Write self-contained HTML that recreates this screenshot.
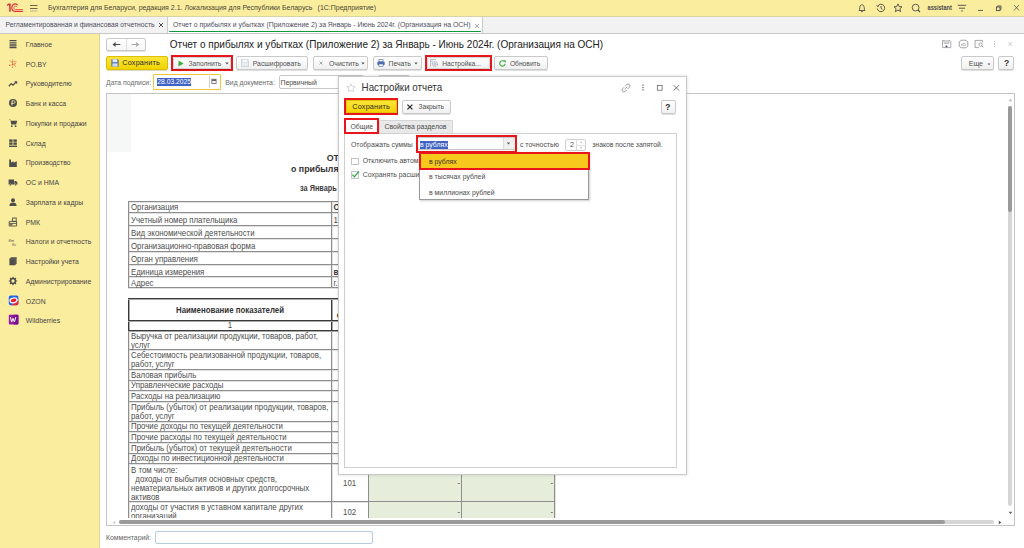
<!DOCTYPE html>
<html><head><meta charset="utf-8">
<style>
*{box-sizing:border-box;margin:0;padding:0}
html,body{width:1024px;height:548px;overflow:hidden}
body{position:relative;font-family:"Liberation Sans",sans-serif;background:#fff;color:#4d4d4d}
.a{position:absolute}
.t{position:absolute;white-space:nowrap;line-height:10px;transform:scaleY(1.12);transform-origin:0 7.6px}
#titlebar{left:0;top:0;width:1024px;height:16px;background:#fbed9e}
#tabbar{left:0;top:16px;width:1024px;height:18px;background:#f2f2f2;border-top:1px solid #d8d3a8;border-bottom:1px solid #c8c8c8}
#sidebar{left:0;top:34px;width:100px;height:514px;background:#fbed9e;border-right:1px solid #ddd59c}
.si{position:absolute;left:25.8px;font-size:6.86px;color:#454545;white-space:nowrap;line-height:10px;transform:scaleY(1.12);transform-origin:0 7.6px}
.btn{position:absolute;height:13.25px;border:1px solid #c9c9c9;border-radius:2px;background:linear-gradient(#ffffff,#f0f0f0);box-shadow:0 1px 0 rgba(0,0,0,.12);font-size:6.9px;color:#4d4d4d;white-space:nowrap;line-height:11px}
.red{position:absolute;border:2px solid #e8161c}
</style></head><body>

<!-- title bar -->
<div id="titlebar" class="a"></div>
<div class="t" style="left:48px;top:3.4px;font-size:6.98px;color:#4a4636">Бухгалтерия для Беларуси, редакция 2.1. Локализация для Республики Беларусь<span style="margin-left:5.2px">(1С:Предприятие)</span></div>


<svg class="a" style="left:6px;top:3px" width="18" height="10" viewBox="0 0 18 10">
 <path d="M1.2 2.4 L2.9 1.2 H3.9 V8.8" stroke="#dc2a3a" stroke-width="1.5" fill="none"/>
 <path d="M11.6 2.2 C11 1.3 10 0.9 9.2 0.9 C7.2 0.9 5.8 2.6 5.8 4.8 C5.8 7.1 7.2 8.3 9.2 8.3 L16.8 8.3" stroke="#dc2a3a" stroke-width="1.2" fill="none"/>
 <path d="M11.2 4.1 C10.8 3.5 10.1 3.2 9.5 3.2 C8.5 3.2 7.9 3.9 7.9 4.8 C7.9 5.8 8.5 6.5 9.5 6.5 L16.8 6.5" stroke="#e8604a" stroke-width="1.0" fill="none"/>
</svg>
<svg class="a" style="left:29px;top:0px" width="10" height="14" viewBox="0 0 10 14">
 <path d="M1 5.5 H8.5 M1 8.5 H8.5" stroke="#6a6450" stroke-width="1"/><path d="M1 11 H8.5" stroke="#9a9680" stroke-width="0.9" stroke-dasharray="1.2 0.5"/>
</svg>
<!-- right icons -->
<svg class="a" style="left:857px;top:3px" width="10" height="10" viewBox="0 0 10 10">
 <path d="M2 7.5 C2.6 6.8 2.8 6 2.8 4.6 C2.8 3 3.8 1.8 5 1.8 C6.2 1.8 7.2 3 7.2 4.6 C7.2 6 7.4 6.8 8 7.5 Z" stroke="#4a4a4a" stroke-width="0.9" fill="none" stroke-linejoin="round"/>
 <path d="M4.1 8.6 H5.9" stroke="#4a4a4a" stroke-width="0.9"/>
</svg>
<svg class="a" style="left:875.5px;top:3px" width="10" height="10" viewBox="0 0 10 10">
 <path d="M1.6 3.4 A3.7 3.7 0 1 1 1.3 5.6" stroke="#4a4a4a" stroke-width="0.9" fill="none"/>
 <path d="M0.6 2.2 L1.6 3.6 L3 2.8" stroke="#4a4a4a" stroke-width="0.8" fill="none"/>
 <path d="M5 3 V5.2 L6.4 6.3" stroke="#4a4a4a" stroke-width="0.9" fill="none"/>
</svg>
<svg class="a" style="left:893px;top:3px" width="10" height="10" viewBox="0 0 10 10">
 <path d="M5 0.9 L6.2 3.6 L9 3.8 L6.9 5.7 L7.6 8.6 L5 7.1 L2.4 8.6 L3.1 5.7 L1 3.8 L3.8 3.6 Z" stroke="#4a4a4a" stroke-width="0.9" fill="none" stroke-linejoin="round"/>
</svg>
<svg class="a" style="left:911px;top:3px" width="10" height="10" viewBox="0 0 10 10">
 <circle cx="4.6" cy="4.6" r="3.4" stroke="#4a4a4a" stroke-width="0.9" fill="none"/>
 <path d="M7 7 L9 9" stroke="#4a4a4a" stroke-width="1.1"/>
</svg>
<div class="t" style="left:927.6px;top:3.2px;font-size:5.6px;color:#4a4a4a;font-weight:bold">assistant</div>
<svg class="a" style="left:957px;top:0px" width="10" height="14" viewBox="0 0 10 14">
 <path d="M0.8 5.3 H9.2 M2 8.2 H8" stroke="#4a4a4a" stroke-width="0.9"/><path d="M4.2 11 H5.8" stroke="#4a4a4a" stroke-width="1.1"/>
</svg>
<svg class="a" style="left:976px;top:0px" width="10" height="16" viewBox="0 0 10 16">
 <path d="M2 10.4 H7" stroke="#4a4a4a" stroke-width="0.9"/>
</svg>
<svg class="a" style="left:994px;top:0px" width="10" height="16" viewBox="0 0 10 16">
 <rect x="2.4" y="7" width="3.6" height="3.6" stroke="#4a4a4a" stroke-width="0.9" fill="none"/>
 <path d="M3.6 7 V5.9 H7 V9.3 H6" stroke="#4a4a4a" stroke-width="0.8" fill="none"/>
</svg>
<svg class="a" style="left:1012px;top:0px" width="10" height="16" viewBox="0 0 10 16">
 <path d="M2 5 L7 10.4 M7 5 L2 10.4" stroke="#555" stroke-width="0.8"/>
</svg>
<!-- tab bar -->
<div id="tabbar" class="a"></div>
<div class="t" style="left:5.6px;top:19.5px;font-size:6.75px;color:#4d4d5a">Регламентированная и финансовая отчетность</div>
<div class="a" style="left:167px;top:17px;width:316px;height:16px;background:#fff;border-left:1px solid #cacaca;border-right:1px solid #cacaca"></div>
<div class="a" style="left:168.8px;top:30.8px;width:312px;height:1.5px;border-radius:1px;background:#0e9a3c"></div>
<div class="t" style="left:173px;top:19.5px;font-size:6.88px;color:#4d4d5a">Отчет о прибылях и убытках (Приложение 2) за Январь - Июнь 2024г. (Организация на ОСН)</div>


<svg class="a" style="left:158px;top:22px" width="6" height="6" viewBox="0 0 6 6"><path d="M1 1 L5 5 M5 1 L1 5" stroke="#444" stroke-width="0.95"/></svg>
<svg class="a" style="left:473.5px;top:22.5px" width="6" height="6" viewBox="0 0 6 6"><path d="M1 1 L5 5 M5 1 L1 5" stroke="#9a9a9a" stroke-width="0.9"/></svg>

<!-- sidebar -->
<div id="sidebar" class="a"></div>
<div class="si" style="top:39.80px">Главное</div>
<div class="si" style="top:59.56px">РО.BY</div>
<div class="si" style="top:79.32px">Руководителю</div>
<div class="si" style="top:99.08px">Банк и касса</div>
<div class="si" style="top:118.84px">Покупки и продажи</div>
<div class="si" style="top:138.60px">Склад</div>
<div class="si" style="top:158.36px">Производство</div>
<div class="si" style="top:178.12px">ОС и НМА</div>
<div class="si" style="top:197.88px">Зарплата и кадры</div>
<div class="si" style="top:217.64px">РМК</div>
<div class="si" style="top:237.40px">Налоги и отчетность</div>
<div class="si" style="top:257.16px">Настройки учета</div>
<div class="si" style="top:276.92px">Администрирование</div>
<div class="si" style="top:296.68px">OZON</div>
<div class="si" style="top:316.44px">Wildberries</div>


<!-- sidebar icons -->
<svg class="a" style="left:8px;top:39.00px" width="10" height="10" viewBox="0 0 10 10">
 <path d="M1.5 1.5 H8.5 M1.5 3.3 H8.5 M1.5 5.1 H8.5 M1.5 6.9 H8.5 M1.5 8.6 H8.5" stroke="#4d4d4d" stroke-width="1.1"/>
</svg>
<svg class="a" style="left:8px;top:58.76px" width="10" height="10" viewBox="0 0 10 10">
 <g stroke="#e4572e" stroke-width="0.75" stroke-dasharray="1 0.5"><path d="M4.6 0.5 V9 M1.8 1.4 L7.6 7.6 M8.4 2.6 H3.4 M1.2 6.4 L8.2 4.4"/></g>
 <circle cx="1.6" cy="6.4" r="0.6" fill="#e4572e"/><circle cx="6.4" cy="5" r="0.55" fill="#e4572e"/>
</svg>
<svg class="a" style="left:8px;top:78.52px" width="10" height="10" viewBox="0 0 10 10">
 <path d="M0.8 7.2 L3.2 4.6 L5 6.2 L8.4 2.8" stroke="#4d4d4d" stroke-width="1.3" fill="none"/>
 <path d="M6.2 2.2 H9.2 V5.2 Z" fill="#4d4d4d"/>
</svg>
<svg class="a" style="left:8px;top:98.28px" width="10" height="10" viewBox="0 0 10 10">
 <circle cx="5" cy="5" r="4" fill="#4d4d4d"/>
 <path d="M4 7.4 V2.8 H5.6 C6.6 2.8 7 3.4 7 4.1 C7 4.8 6.6 5.4 5.6 5.4 H3.2" stroke="#fbed9e" stroke-width="0.9" fill="none"/>
</svg>
<svg class="a" style="left:8px;top:118.04px" width="10" height="10" viewBox="0 0 10 10">
 <path d="M0.8 1.6 H2.4 L3.2 6.4 H8.2 L9.2 2.8 H2.8 Z" fill="#4d4d4d"/>
 <circle cx="3.8" cy="8.2" r="0.9" fill="#4d4d4d"/><circle cx="7.6" cy="8.2" r="0.9" fill="#4d4d4d"/>
</svg>
<svg class="a" style="left:8px;top:137.80px" width="10" height="10" viewBox="0 0 10 10">
 <g fill="#4d4d4d"><rect x="1.2" y="1.4" width="3.4" height="2.4"/><rect x="5.4" y="1.4" width="3.4" height="2.4"/><rect x="1.2" y="4.4" width="3.4" height="2.4"/><rect x="5.4" y="4.4" width="3.4" height="2.4"/><rect x="1" y="7.6" width="8" height="1.4"/></g>
</svg>
<svg class="a" style="left:8px;top:157.56px" width="10" height="10" viewBox="0 0 10 10">
 <path d="M1.2 9 V1.4 H3 V4.6 L5.6 3.2 V4.8 L8.8 3.2 V9 Z" fill="#4d4d4d"/>
</svg>
<svg class="a" style="left:8px;top:177.32px" width="10" height="10" viewBox="0 0 10 10">
 <path d="M0.6 2.6 H6 V7.4 H0.6 Z M6.4 4 H8.2 L9.4 5.6 V7.4 H6.4 Z" fill="#4d4d4d"/>
 <circle cx="2.4" cy="7.8" r="1" fill="#4d4d4d" stroke="#fbed9e" stroke-width="0.4"/><circle cx="7.6" cy="7.8" r="1" fill="#4d4d4d" stroke="#fbed9e" stroke-width="0.4"/>
</svg>
<svg class="a" style="left:8px;top:197.08px" width="10" height="10" viewBox="0 0 10 10">
 <circle cx="5" cy="3.2" r="2" fill="#4d4d4d"/>
 <path d="M1.4 9 C1.4 6.6 3 5.6 5 5.6 C7 5.6 8.6 6.6 8.6 9 Z" fill="#4d4d4d"/>
</svg>
<svg class="a" style="left:8px;top:216.84px" width="10" height="10" viewBox="0 0 10 10">
 <path d="M1.2 4.4 H8.6 V9 H1.2 Z M1.2 6.4 H8.6" stroke="#4d4d4d" stroke-width="0.9" fill="none"/>
 <rect x="4.6" y="1" width="3.6" height="3.4" fill="none" stroke="#4d4d4d" stroke-width="0.9"/>
 <rect x="2" y="7.2" width="2.4" height="1.2" fill="#4d4d4d"/>
</svg>
<svg class="a" style="left:8px;top:236.60px" width="10" height="10" viewBox="0 0 10 10">
 <text x="0.5" y="4.6" font-size="4" font-family="Liberation Sans" fill="#4d4d4d" font-style="italic">Кт</text>
 <text x="4" y="9" font-size="3.6" font-family="Liberation Sans" fill="#4d4d4d" font-style="italic">Кн</text>
</svg>
<svg class="a" style="left:8px;top:256.36px" width="10" height="10" viewBox="0 0 10 10">
 <path d="M1.4 3 L3 1.2 H8.6 V7.4 L7 9.2 H1.4 Z" fill="#4d4d4d"/>
 <path d="M1.4 3 H7 V9.2 M7 3 L8.6 1.2" stroke="#7a7466" stroke-width="0.5" fill="none"/>
</svg>
<svg class="a" style="left:8px;top:276.12px" width="10" height="10" viewBox="0 0 10 10">
 <circle cx="5" cy="5" r="2.4" stroke="#4d4d4d" stroke-width="1.5" fill="none"/>
 <g stroke="#4d4d4d" stroke-width="1.2"><path d="M5 0.8 V2.4 M5 7.6 V9.2 M0.8 5 H2.4 M7.6 5 H9.2 M2 2 L3.1 3.1 M6.9 6.9 L8 8 M8 2 L6.9 3.1 M3.1 6.9 L2 8"/></g>
</svg>
<svg class="a" style="left:8px;top:294.78px" width="11" height="11" viewBox="0 0 11 11">
 <rect x="0.8" y="0.6" width="9.6" height="9.6" rx="1.8" fill="#1e64f0"/>
 <path d="M3 10.2 L10.4 5.6 V8.4 A1.8 1.8 0 0 1 8.6 10.2 Z" fill="#f0243c"/>
 <ellipse cx="5.6" cy="5.4" rx="4.2" ry="2.9" fill="#fff" transform="rotate(-12 5.6 5.4)"/>
 <ellipse cx="5.6" cy="5.4" rx="2.9" ry="1.7" fill="#ee1c2e" transform="rotate(-12 5.6 5.4)"/>
</svg>
<svg class="a" style="left:8px;top:314.44px" width="11" height="11" viewBox="0 0 11 11">
 <rect x="0.8" y="0.8" width="9.6" height="9.6" rx="0.8" fill="#9b1aa8"/>
 <path d="M5.6 0.8 H9.6 A0.8 0.8 0 0 1 10.4 1.6 V9.6 A0.8 0.8 0 0 1 9.6 10.4 H5.6 Z" fill="#7a1190"/>
 <path d="M2.4 3 L3.6 8 L5 4.4 L6.4 8 L7.8 3" stroke="#fff" stroke-width="1" fill="none"/>
</svg>

<!-- main header -->
<div class="t" style="left:169.75px;top:39.5px;font-size:10.03px;color:#222">Отчет о прибылях и убытках (Приложение 2) за Январь - Июнь 2024г. (Организация на ОСН)</div>


<!-- nav buttons -->
<div class="a" style="left:106px;top:38px;width:40px;height:12.8px;border:1px solid #c8c8c8;border-radius:2px;background:linear-gradient(#fff,#f6f6f6);box-shadow:0 1px 0 rgba(0,0,0,.12)"></div>
<div class="a" style="left:126px;top:39px;width:1px;height:11px;background:#e0e0e0"></div>
<svg class="a" style="left:111px;top:40px" width="10" height="9" viewBox="0 0 10 9">
 <path d="M1.5 4.5 L4.6 1.9 V7.1 Z" fill="#4a4a4a"/><path d="M4 4.5 H8.9" stroke="#4a4a4a" stroke-width="1.2" stroke-linecap="round"/>
</svg>
<svg class="a" style="left:131px;top:40px" width="10" height="9" viewBox="0 0 10 9">
 <path d="M8.3 4.5 L5.2 1.9 V7.1 Z" fill="#a8a8a8"/><path d="M1 4.5 H5.8" stroke="#a8a8a8" stroke-width="1.1" stroke-linecap="round"/>
</svg>

<!-- top-right form icons -->
<svg class="a" style="left:941px;top:39px" width="11" height="10" viewBox="0 0 11 10">
 <path d="M1.5 1.5 H9 L9.8 2.3 V8.6 H1.5 Z" stroke="#8a8a8a" stroke-width="0.7" fill="#fff"/>
 <path d="M3 1.5 V4.4 H8 V1.5" stroke="#9a9a9a" stroke-width="0.6" fill="#eee"/>
 <path d="M4.2 2 V4 M5.4 2 V4 M6.6 2 V4" stroke="#aaa" stroke-width="0.4"/>
 <rect x="4.6" y="6.6" width="1.8" height="1.6" fill="#3a3f7a"/>
</svg>
<svg class="a" style="left:957.5px;top:39px" width="11" height="10" viewBox="0 0 11 10">
 <path d="M3 1.2 H8 L9.8 3 V7 L8 8.8 H3 L1.2 7 V3 Z" stroke="#8a8a8a" stroke-width="0.8" fill="none"/>
 <path d="M3.2 6.2 C4 4.2 6.4 4 7.6 5.2 M3.2 6.2 H8" stroke="#8a8a8a" stroke-width="0.6" fill="none"/>
</svg>
<svg class="a" style="left:973.5px;top:39px" width="11" height="10" viewBox="0 0 11 10">
 <path d="M8.4 3.4 V1.4 H1.1 V8.6 H4.8" stroke="#8a8a8a" stroke-width="0.75" fill="none"/>
 <circle cx="6.6" cy="5.6" r="1.7" stroke="#8a8a8a" stroke-width="0.75" fill="none"/>
 <path d="M7.8 6.8 L9.2 8.4" stroke="#8a8a8a" stroke-width="0.9"/>
</svg>
<svg class="a" style="left:992px;top:39px" width="5" height="10" viewBox="0 0 5 10">
 <path d="M2.5 2 V8.4" stroke="#aaa" stroke-width="0.8" stroke-dasharray="1 0.6"/>
</svg>
<svg class="a" style="left:1007px;top:40px" width="7" height="8" viewBox="0 0 7 8">
 <path d="M1.3 2.3 L5.2 5.9 M5.2 2.3 L1.3 5.9" stroke="#c0c0c0" stroke-width="0.8"/>
</svg>

<!-- toolbar -->
<div class="btn" style="left:106px;top:56px;width:62px;height:14px;background:linear-gradient(#fde53a,#f2d400);border-color:#dcc000;box-shadow:0 1px 0 rgba(120,100,0,.25)"></div>
<svg class="a" style="left:110.5px;top:59px" width="8" height="8" viewBox="0 0 8 8">
 <path d="M0.3 0.3 H6.9 L7.7 1.1 V7.7 H0.3 Z" fill="#5b79b0"/>
 <rect x="1.6" y="0.3" width="4.6" height="2.8" fill="#e6ecf5"/>
 <rect x="1.4" y="4.4" width="5.2" height="3.3" fill="#cfd9ea"/>
</svg>
<div class="t" style="left:122.3px;top:58.2px;font-size:7.25px;letter-spacing:0.18px;color:#2e2e2e">Сохранить</div>

<div class="red" style="left:170.5px;top:54.75px;width:62.25px;height:16.5px"></div>
<div class="btn" style="left:172.5px;top:56.75px;width:58.25px;height:12.5px;border-color:#d4d4d4"></div>
<svg class="a" style="left:177.5px;top:59.5px" width="6" height="7" viewBox="0 0 6 7"><path d="M0.5 0.5 L5.6 3.5 L0.5 6.5 Z" fill="#3aae3a"/></svg>
<div class="t" style="left:188.5px;top:58.5px;font-size:6.7px;color:#505050">Заполнить</div>
<svg class="a" style="left:224.5px;top:62px" width="4" height="3" viewBox="0 0 4 3"><path d="M0.3 0.5 H3.7 L2 2.6 Z" fill="#555"/></svg>

<div class="btn" style="left:236px;top:56px;width:72px;height:14px"></div>
<svg class="a" style="left:240.5px;top:59px" width="8" height="8" viewBox="0 0 8 8">
 <path d="M0.4 0.4 H6.8 L7.6 1.2 V7.6 H0.4 Z" fill="#e7ecf2" stroke="#b6c2cf" stroke-width="0.6"/>
 <rect x="1.8" y="0.6" width="4.4" height="2.6" fill="#fbfcfd" stroke="#c9d2dc" stroke-width="0.4"/>
</svg>
<div class="t" style="left:252.75px;top:58.5px;font-size:6.85px;color:#505050">Расшифровать</div>

<div class="btn" style="left:313px;top:56px;width:55px;height:14px"></div>
<svg class="a" style="left:318.5px;top:61px" width="4" height="4" viewBox="0 0 4 4"><path d="M0.5 0.5 L3.5 3.5 M3.5 0.5 L0.5 3.5" stroke="#8a8a8a" stroke-width="0.7"/></svg>
<div class="t" style="left:329px;top:58.5px;font-size:6.85px;color:#505050">Очистить</div>
<svg class="a" style="left:360.5px;top:62px" width="4" height="3" viewBox="0 0 4 3"><path d="M0.3 0.5 H3.7 L2 2.6 Z" fill="#555"/></svg>

<div class="btn" style="left:373px;top:56px;width:48.5px;height:14px"></div>
<svg class="a" style="left:377px;top:59px" width="8" height="8" viewBox="0 0 8 8">
 <rect x="2" y="0.5" width="4" height="2.4" fill="#fff" stroke="#4d6fae" stroke-width="0.6"/>
 <rect x="0.3" y="2.6" width="7.4" height="3.6" rx="1.2" fill="#4d6fae"/>
 <rect x="2" y="5" width="4" height="2.6" fill="#fff" stroke="#4d6fae" stroke-width="0.6"/>
</svg>
<div class="t" style="left:388.5px;top:58.5px;font-size:6.85px;color:#505050">Печать</div>
<svg class="a" style="left:414px;top:62px" width="4" height="3" viewBox="0 0 4 3"><path d="M0.3 0.5 H3.7 L2 2.6 Z" fill="#555"/></svg>

<div class="red" style="left:424.5px;top:54.5px;width:67px;height:16.5px"></div>
<div class="btn" style="left:426.5px;top:56.5px;width:63px;height:12.5px;border-color:#d4d4d4"></div>
<svg class="a" style="left:430px;top:59px" width="9" height="9" viewBox="0 0 9 9">
 <path d="M0.5 7.5 V0.5 H6" fill="none" stroke="#8d9cb0" stroke-width="0.6"/>
 <path d="M0.5 2.2 H3" stroke="#8d9cb0" stroke-width="0.6"/>
 <circle cx="5" cy="5" r="2.6" fill="none" stroke="#8d9cb0" stroke-width="0.9" stroke-dasharray="1.1 0.5"/>
 <circle cx="5" cy="5" r="1.1" fill="none" stroke="#8d9cb0" stroke-width="0.7"/>
</svg>
<div class="t" style="left:442.25px;top:58.5px;font-size:6.7px;color:#505050">Настройка...</div>

<div class="btn" style="left:494.4px;top:56px;width:53.4px;height:14px"></div>
<svg class="a" style="left:498.5px;top:59.5px" width="7" height="7" viewBox="0 0 7 7">
 <path d="M6.1 3.9 A2.7 2.7 0 1 1 5.2 1.4" stroke="#45b045" stroke-width="1.2" fill="none"/>
 <path d="M3.9 0.2 L6.8 0.3 L6.5 3 Z" fill="#45b045"/>
</svg>
<div class="t" style="left:509.9px;top:58.5px;font-size:6.7px;color:#505050">Обновить</div>

<div class="btn" style="left:961.25px;top:56px;width:32.25px;height:14px"></div>
<div class="t" style="left:968.7px;top:58.8px;font-size:7.05px;color:#505050">Еще</div>
<svg class="a" style="left:986.5px;top:62.5px" width="4" height="3" viewBox="0 0 4 3"><path d="M0.6 0.6 H3.4 L2 2.2 Z" fill="#555"/></svg>
<div class="btn" style="left:998.25px;top:56px;width:15.9px;height:14px"></div>
<div class="t" style="left:1004px;top:58px;font-size:8.6px;font-weight:bold;color:#3a3a3a">?</div>

<!-- date row -->
<div class="t" style="left:106px;top:77.6px;font-size:6.85px;color:#6a6a6a">Дата подписи:</div>
<div class="a" style="left:153.25px;top:74px;width:67.75px;height:15.8px;border:1px solid #f4c53a;border-radius:1px;background:#fff"></div>
<div class="a" style="left:157.2px;top:77.5px;width:33.8px;height:8.2px;background:#3f62c4"></div>
<div class="t" style="left:157.3px;top:77px;font-size:6.75px;color:#fff">28.03.2025</div>
<div class="a" style="left:208.5px;top:75.5px;width:1px;height:12px;background:#d0d0d0"></div>
<svg class="a" style="left:211px;top:78px" width="6" height="6" viewBox="0 0 6 6">
 <rect x="0.9" y="1.4" width="4.2" height="4" fill="none" stroke="#555" stroke-width="0.75"/>
 <path d="M0.9 2.5 H5.1" stroke="#555" stroke-width="0.9"/><path d="M2 0.6 V1.6 M4 0.6 V1.6" stroke="#555" stroke-width="0.6"/>
</svg>
<div class="t" style="left:225.25px;top:77.6px;font-size:6.85px;color:#6a6a6a">Вид документа:</div>
<div class="a" style="left:278.6px;top:75px;width:85px;height:13.5px;border:1px solid #c8c8c8;border-radius:2px;background:#fff"></div>
<div class="a" style="left:377.6px;top:75px;width:32.2px;height:13.5px;border:1px solid #c8c8c8;border-radius:2px;background:#fff"></div>
<div class="t" style="left:280.5px;top:77.6px;font-size:6.9px;color:#4d4d4d">Первичный</div>

<!-- comment row -->
<div class="t" style="left:106px;top:532.5px;font-size:6.85px;color:#666">Комментарий:</div>
<div class="a" style="left:154.75px;top:531.25px;width:218.5px;height:12.75px;border:1px solid #b8cbe0;border-radius:2px;background:#fff"></div>


<!-- report area -->
<div class="a" style="left:106px;top:93px;width:909px;height:433px;border:1px solid #c4c4c4;overflow:hidden;background:#fff">
<div class="a" style="left:0;top:0;width:24px;height:58px;background:#f6f7f7"></div>
<div class="a" style="left:0;top:0;width:907px;height:423.60px;overflow:hidden">
<div class="t" style="left:219.75px;top:59.10px;font-size:8.8px;color:#333;font-weight:bold;">ОТЧЕТ</div>
<div class="t" style="left:184.00px;top:69.60px;font-size:8.8px;color:#333;font-weight:bold;">о прибылях и убытках</div>
<div class="t" style="left:193.10px;top:89.90px;font-size:7.3px;color:#3a3a3a;font-weight:bold;">за Январь - Июнь 2024 г.</div>
<div class="a" style="left:21px;top:108px;width:513px;height:1px;background:#e2e2e2"></div>
<div class="a" style="left:21px;top:119px;width:513px;height:1px;background:#e2e2e2"></div>
<div class="a" style="left:21px;top:132px;width:513px;height:1px;background:#e2e2e2"></div>
<div class="a" style="left:21px;top:145px;width:513px;height:1px;background:#e2e2e2"></div>
<div class="a" style="left:21px;top:158px;width:513px;height:1px;background:#e2e2e2"></div>
<div class="a" style="left:21px;top:171px;width:513px;height:1px;background:#e2e2e2"></div>
<div class="a" style="left:21px;top:183px;width:513px;height:1px;background:#e2e2e2"></div>
<div class="a" style="left:21px;top:194px;width:513px;height:1px;background:#e2e2e2"></div>
<div class="a" style="left:22px;top:107px;width:1px;height:87px;background:#e2e2e2"></div>
<div class="a" style="left:225px;top:107px;width:1px;height:87px;background:#e2e2e2"></div>
<div class="a" style="left:534px;top:107px;width:1px;height:87px;background:#e2e2e2"></div>
<div class="a" style="left:21px;top:256px;width:427px;height:1px;background:#e2e2e2"></div>
<div class="a" style="left:21px;top:276px;width:427px;height:1px;background:#e2e2e2"></div>
<div class="a" style="left:21px;top:287px;width:427px;height:1px;background:#e2e2e2"></div>
<div class="a" style="left:21px;top:297px;width:427px;height:1px;background:#e2e2e2"></div>
<div class="a" style="left:21px;top:308px;width:427px;height:1px;background:#e2e2e2"></div>
<div class="a" style="left:21px;top:328px;width:427px;height:1px;background:#e2e2e2"></div>
<div class="a" style="left:21px;top:338px;width:427px;height:1px;background:#e2e2e2"></div>
<div class="a" style="left:21px;top:349px;width:427px;height:1px;background:#e2e2e2"></div>
<div class="a" style="left:21px;top:360px;width:427px;height:1px;background:#e2e2e2"></div>
<div class="a" style="left:21px;top:370px;width:427px;height:1px;background:#e2e2e2"></div>
<div class="a" style="left:21px;top:408px;width:427px;height:1px;background:#e2e2e2"></div>
<div class="a" style="left:21px;top:447px;width:427px;height:1px;background:#e2e2e2"></div>
<div class="a" style="left:22px;top:236px;width:1px;height:211px;background:#e2e2e2"></div>
<div class="a" style="left:225px;top:236px;width:1px;height:211px;background:#e2e2e2"></div>
<div class="a" style="left:262px;top:236px;width:1px;height:211px;background:#e2e2e2"></div>
<div class="a" style="left:355px;top:236px;width:1px;height:211px;background:#e2e2e2"></div>
<div class="a" style="left:448px;top:236px;width:1px;height:211px;background:#e2e2e2"></div>
<div class="a" style="left:21px;top:107px;width:513px;height:1px;background:#8e8e8e"></div>
<div class="a" style="left:21px;top:118px;width:513px;height:1px;background:#8e8e8e"></div>
<div class="a" style="left:21px;top:131px;width:513px;height:1px;background:#8e8e8e"></div>
<div class="a" style="left:21px;top:144px;width:513px;height:1px;background:#8e8e8e"></div>
<div class="a" style="left:21px;top:157px;width:513px;height:1px;background:#8e8e8e"></div>
<div class="a" style="left:21px;top:170px;width:513px;height:1px;background:#8e8e8e"></div>
<div class="a" style="left:21px;top:182px;width:513px;height:1px;background:#8e8e8e"></div>
<div class="a" style="left:21px;top:193px;width:513px;height:1px;background:#8e8e8e"></div>
<div class="a" style="left:21px;top:107px;width:1px;height:87px;background:#8e8e8e"></div>
<div class="a" style="left:224px;top:107px;width:1px;height:87px;background:#8e8e8e"></div>
<div class="a" style="left:533px;top:107px;width:1px;height:87px;background:#8e8e8e"></div>
<div class="t" style="left:24.00px;top:109.10px;font-size:7.85px;color:#4d4d4d;">Организация</div>
<div class="t" style="left:226.50px;top:109.10px;font-size:7.85px;color:#333;font-weight:bold;">Организация на ОСН</div>
<div class="t" style="left:24.00px;top:122.10px;font-size:7.85px;color:#4d4d4d;">Учетный номер плательщика</div>
<div class="t" style="left:226.50px;top:122.10px;font-size:7.85px;color:#4d4d4d;">190000000</div>
<div class="t" style="left:24.00px;top:134.90px;font-size:7.85px;color:#4d4d4d;">Вид экономической деятельности</div>
<div class="t" style="left:24.00px;top:148.00px;font-size:7.85px;color:#4d4d4d;">Организационно-правовая форма</div>
<div class="t" style="left:24.00px;top:161.10px;font-size:7.85px;color:#4d4d4d;">Орган управления</div>
<div class="t" style="left:24.00px;top:173.60px;font-size:7.85px;color:#4d4d4d;">Единица измерения</div>
<div class="t" style="left:226.50px;top:173.60px;font-size:7.85px;color:#333;font-weight:bold;">в рублях</div>
<div class="t" style="left:24.00px;top:184.60px;font-size:7.85px;color:#4d4d4d;">Адрес</div>
<div class="t" style="left:226.50px;top:184.60px;font-size:7.85px;color:#4d4d4d;">г. Минск</div>
<div class="a" style="left:261.20px;top:236.20px;width:186.10px;height:19.20px;background:#e6eedb"></div>
<div class="a" style="left:261.20px;top:255.40px;width:186.10px;height:20.20px;background:#e6eedb"></div>
<div class="a" style="left:261.20px;top:275.60px;width:186.10px;height:10.65px;background:#e6eedb"></div>
<div class="a" style="left:261.20px;top:286.25px;width:186.10px;height:10.35px;background:#e6eedb"></div>
<div class="a" style="left:261.20px;top:296.60px;width:186.10px;height:10.65px;background:#e6eedb"></div>
<div class="a" style="left:261.20px;top:307.25px;width:186.10px;height:20.00px;background:#e6eedb"></div>
<div class="a" style="left:261.20px;top:327.25px;width:186.10px;height:10.65px;background:#e6eedb"></div>
<div class="a" style="left:261.20px;top:337.90px;width:186.10px;height:10.60px;background:#e6eedb"></div>
<div class="a" style="left:261.20px;top:348.50px;width:186.10px;height:10.60px;background:#e6eedb"></div>
<div class="a" style="left:261.20px;top:359.10px;width:186.10px;height:10.65px;background:#e6eedb"></div>
<div class="a" style="left:261.20px;top:369.75px;width:186.10px;height:37.25px;background:#e6eedb"></div>
<div class="a" style="left:261.20px;top:407.00px;width:186.10px;height:39.00px;background:#e6eedb"></div>
<div class="a" style="left:21px;top:255px;width:427px;height:1px;background:#8e8e8e"></div>
<div class="a" style="left:21px;top:275px;width:427px;height:1px;background:#8e8e8e"></div>
<div class="a" style="left:21px;top:286px;width:427px;height:1px;background:#8e8e8e"></div>
<div class="a" style="left:21px;top:296px;width:427px;height:1px;background:#8e8e8e"></div>
<div class="a" style="left:21px;top:307px;width:427px;height:1px;background:#8e8e8e"></div>
<div class="a" style="left:21px;top:327px;width:427px;height:1px;background:#8e8e8e"></div>
<div class="a" style="left:21px;top:337px;width:427px;height:1px;background:#8e8e8e"></div>
<div class="a" style="left:21px;top:348px;width:427px;height:1px;background:#8e8e8e"></div>
<div class="a" style="left:21px;top:359px;width:427px;height:1px;background:#8e8e8e"></div>
<div class="a" style="left:21px;top:369px;width:427px;height:1px;background:#8e8e8e"></div>
<div class="a" style="left:21px;top:407px;width:427px;height:1px;background:#8e8e8e"></div>
<div class="a" style="left:21px;top:446px;width:427px;height:1px;background:#8e8e8e"></div>
<div class="a" style="left:21px;top:236px;width:1px;height:211px;background:#8e8e8e"></div>
<div class="a" style="left:224px;top:236px;width:1px;height:211px;background:#8e8e8e"></div>
<div class="a" style="left:261px;top:236px;width:1px;height:211px;background:#8e8e8e"></div>
<div class="a" style="left:354px;top:236px;width:1px;height:211px;background:#8e8e8e"></div>
<div class="a" style="left:447px;top:236px;width:1px;height:211px;background:#8e8e8e"></div>
<div class="a" style="left:21px;top:204.00px;width:1px;height:34.00px;background:#3a3a3a"></div>
<div class="a" style="left:22px;top:204.00px;width:1px;height:34.00px;background:#a8a8a8"></div>
<div class="a" style="left:224px;top:204.00px;width:1px;height:34.00px;background:#3a3a3a"></div>
<div class="a" style="left:225px;top:204.00px;width:1px;height:34.00px;background:#a8a8a8"></div>
<div class="a" style="left:261px;top:204.00px;width:1px;height:34.00px;background:#3a3a3a"></div>
<div class="a" style="left:262px;top:204.00px;width:1px;height:34.00px;background:#a8a8a8"></div>
<div class="a" style="left:354px;top:204.00px;width:1px;height:34.00px;background:#3a3a3a"></div>
<div class="a" style="left:355px;top:204.00px;width:1px;height:34.00px;background:#a8a8a8"></div>
<div class="a" style="left:447px;top:204.00px;width:1px;height:34.00px;background:#3a3a3a"></div>
<div class="a" style="left:448px;top:204.00px;width:1px;height:34.00px;background:#a8a8a8"></div>
<div class="a" style="left:21.00px;top:204px;width:427.30px;height:1px;background:#3a3a3a"></div>
<div class="a" style="left:21.00px;top:205px;width:427.30px;height:1px;background:#a8a8a8"></div>
<div class="a" style="left:21.00px;top:226px;width:427.30px;height:1px;background:#3a3a3a"></div>
<div class="a" style="left:21.00px;top:227px;width:427.30px;height:1px;background:#a8a8a8"></div>
<div class="a" style="left:21.00px;top:236px;width:427.30px;height:1px;background:#3a3a3a"></div>
<div class="a" style="left:21.00px;top:237px;width:427.30px;height:1px;background:#a8a8a8"></div>
<div class="t" style="left:23.00px;top:211.60px;width:200px;text-align:center;font-size:7.85px;color:#333;font-weight:bold;">Наименование показателей</div>
<div class="t" style="left:225.00px;top:208.10px;width:36px;text-align:center;font-size:7.85px;color:#333;font-weight:bold;">Код</div>
<div class="t" style="left:225.00px;top:217.10px;width:36px;text-align:center;font-size:7.85px;color:#333;font-weight:bold;">строки</div>
<div class="t" style="left:103.00px;top:226.80px;width:40px;text-align:center;font-size:7.85px;color:#4d4d4d;">1</div>
<div class="t" style="left:24.00px;top:237.80px;font-size:7.85px;color:#4d4d4d;">Выручка от реализации продукции, товаров, работ,</div>
<div class="t" style="left:24.00px;top:246.80px;font-size:7.85px;color:#4d4d4d;">услуг</div>
<div class="t" style="left:24.00px;top:257.10px;font-size:7.85px;color:#4d4d4d;">Себестоимость реализованной продукции, товаров,</div>
<div class="t" style="left:24.00px;top:266.10px;font-size:7.85px;color:#4d4d4d;">работ, услуг</div>
<div class="t" style="left:24.00px;top:276.60px;font-size:7.85px;color:#4d4d4d;">Валовая прибыль</div>
<div class="t" style="left:24.00px;top:287.20px;font-size:7.85px;color:#4d4d4d;">Управленческие расходы</div>
<div class="t" style="left:24.00px;top:297.80px;font-size:7.85px;color:#4d4d4d;">Расходы на реализацию</div>
<div class="t" style="left:24.00px;top:308.60px;font-size:7.85px;color:#4d4d4d;">Прибыль (убыток) от реализации продукции, товаров,</div>
<div class="t" style="left:24.00px;top:317.60px;font-size:7.85px;color:#4d4d4d;">работ, услуг</div>
<div class="t" style="left:24.00px;top:328.40px;font-size:7.85px;color:#4d4d4d;">Прочие доходы по текущей деятельности</div>
<div class="t" style="left:24.00px;top:339.00px;font-size:7.85px;color:#4d4d4d;">Прочие расходы по текущей деятельности</div>
<div class="t" style="left:24.00px;top:349.60px;font-size:7.85px;color:#4d4d4d;">Прибыль (убыток) от текущей деятельности</div>
<div class="t" style="left:24.00px;top:360.20px;font-size:7.85px;color:#4d4d4d;">Доходы по инвестиционной деятельности</div>
<div class="t" style="left:24.00px;top:371.60px;font-size:7.85px;color:#4d4d4d;">В том числе:</div>
<div class="t" style="left:24.00px;top:380.60px;font-size:7.85px;color:#4d4d4d;">&nbsp;&nbsp;доходы от выбытия основных средств,</div>
<div class="t" style="left:24.00px;top:389.60px;font-size:7.85px;color:#4d4d4d;">нематериальных активов и других долгосрочных</div>
<div class="t" style="left:24.00px;top:398.60px;font-size:7.85px;color:#4d4d4d;">активов</div>
<div class="t" style="left:24.00px;top:409.00px;font-size:7.85px;color:#4d4d4d;">доходы от участия в уставном капитале других</div>
<div class="t" style="left:24.00px;top:418.00px;font-size:7.85px;color:#4d4d4d;">организаций</div>
<div class="t" style="left:227.60px;top:385.10px;width:30px;text-align:center;font-size:7.85px;color:#4d4d4d;">101</div>
<div class="t" style="left:333.00px;top:385.10px;width:20px;text-align:right;font-size:7.85px;color:#4d4d4d;">-</div>
<div class="t" style="left:426.00px;top:385.10px;width:20px;text-align:right;font-size:7.85px;color:#4d4d4d;">-</div>
<div class="t" style="left:227.60px;top:414.10px;width:30px;text-align:center;font-size:7.85px;color:#4d4d4d;">102</div>
<div class="t" style="left:333.00px;top:414.10px;width:20px;text-align:right;font-size:7.85px;color:#4d4d4d;">-</div>
<div class="t" style="left:426.00px;top:414.10px;width:20px;text-align:right;font-size:7.85px;color:#4d4d4d;">-</div>
</div>
</div>

<!-- scrollbars -->
<div class="a" style="left:1008.1px;top:106.4px;width:4px;height:399.2px;border-radius:2px;background:#d6d6d6"></div>
<div class="a" style="left:1008.1px;top:106.4px;width:4px;height:105.4px;border-radius:2px;background:#9a9a9a"></div>
<svg class="a" style="left:1008px;top:98px" width="5" height="4" viewBox="0 0 5 4"><path d="M0.6 3.2 H4.4 L2.5 0.8 Z" fill="#bbb"/></svg>
<svg class="a" style="left:1008px;top:510.5px" width="5" height="4" viewBox="0 0 5 4"><path d="M0.6 0.8 H4.4 L2.5 3.2 Z" fill="#666"/></svg>
<div class="a" style="left:119px;top:519.75px;width:874.5px;height:4px;border-radius:2px;background:#d6d6d6"></div>
<div class="a" style="left:119px;top:519.75px;width:825.75px;height:4px;border-radius:2px;background:#9a9a9a"></div>
<svg class="a" style="left:111.5px;top:519.5px" width="4" height="5" viewBox="0 0 4 5"><path d="M3.2 0.6 V4.4 L0.8 2.5 Z" fill="#ccc"/></svg>
<svg class="a" style="left:998px;top:519.5px" width="4" height="5" viewBox="0 0 4 5"><path d="M0.8 0.6 V4.4 L3.2 2.5 Z" fill="#555"/></svg>

<!-- dialog -->
<div class="a" style="left:338px;top:76px;width:349px;height:398.5px;background:#fff;border:1px solid #c9c9c9;box-shadow:0 0 3px rgba(0,0,0,.15)"></div>
<div class="t" style="left:361.6px;top:82.5px;font-size:9.8px;color:#333">Настройки отчета</div>
<svg class="a" style="left:346px;top:83px" width="10" height="10" viewBox="0 0 10 10">
 <path d="M5 0.8 L6.2 3.6 L9.2 3.8 L6.9 5.8 L7.6 8.8 L5 7.2 L2.4 8.8 L3.1 5.8 L0.8 3.8 L3.8 3.6 Z" stroke="#c4c4c4" stroke-width="0.7" fill="none" stroke-linejoin="round"/>
</svg>
<svg class="a" style="left:620px;top:82px" width="12" height="12" viewBox="0 0 12 12">
 <g transform="rotate(-45 6 6)" stroke="#8a8a8a" stroke-width="0.8" fill="none">
  <path d="M5.2 4.1 H3.1 A1.9 1.9 0 0 0 3.1 7.9 H5.2"/>
  <path d="M6.8 4.1 H8.9 A1.9 1.9 0 0 1 8.9 7.9 H6.8"/>
  <path d="M4.3 6 H7.7"/>
 </g>
</svg>
<svg class="a" style="left:641px;top:83px" width="4" height="9" viewBox="0 0 4 9">
 <g fill="#555"><rect x="1.4" y="1.6" width="1.2" height="1.2"/><rect x="1.4" y="3.9" width="1.2" height="1.2"/><rect x="1.4" y="6.2" width="1.2" height="1.2"/></g>
</svg>
<svg class="a" style="left:655px;top:83px" width="9" height="9" viewBox="0 0 9 9">
 <rect x="2.3" y="2.6" width="4.8" height="4.6" stroke="#555" stroke-width="0.7" fill="none"/>
</svg>
<svg class="a" style="left:671.5px;top:83px" width="9" height="9" viewBox="0 0 9 9">
 <path d="M1.6 2.1 L7.1 7.6 M7.1 2.1 L1.6 7.6" stroke="#555" stroke-width="0.8"/>
</svg>
<div class="red" style="left:344.1px;top:98px;width:54.4px;height:17.25px"></div>
<div class="btn" style="left:346px;top:100px;width:50.5px;height:13.4px;border-radius:0;background:linear-gradient(#fde53a,#f2d400);border-color:#e0c400;box-shadow:none"></div>
<div class="t" style="left:352.3px;top:102.2px;font-size:7.25px;letter-spacing:0.18px;color:#2e2e2e">Сохранить</div>
<div class="btn" style="left:402.25px;top:99.5px;width:49px;height:14px"></div>
<div class="t" style="left:418.5px;top:102.3px;font-size:6.65px;color:#505050">Закрыть</div>
<svg class="a" style="left:406px;top:103px" width="8" height="8" viewBox="0 0 8 8">
 <path d="M1.4 1.6 L6.4 6.4 M6.4 1.6 L1.4 6.4" stroke="#2a2a2a" stroke-width="1.3"/>
</svg>
<div class="btn" style="left:660.6px;top:100px;width:15.9px;height:13.75px"></div>
<div class="t" style="left:665.3px;top:101.5px;font-size:8.4px;font-weight:bold;color:#2a2a2a">?</div>
<!-- tabs -->
<div class="a" style="left:379.4px;top:119.6px;width:73.5px;height:14px;background:#e9e9e9;border:1px solid #d6d6d6;border-bottom:none;border-radius:2px 2px 0 0"></div>
<div class="t" style="left:384.5px;top:121.5px;font-size:6.9px;color:#4d4d4d">Свойства разделов</div>
<div class="a" style="left:344.1px;top:133.4px;width:332.5px;height:334.6px;border:1px solid #d0d0d0;background:#fff"></div>
<div class="a" style="left:345px;top:119px;width:34px;height:15px;background:#fff"></div>
<div class="red" style="left:344.1px;top:118.4px;width:35.3px;height:15.2px"></div>
<div class="t" style="left:350.5px;top:121.5px;font-size:6.9px;color:#4d4d4d">Общие</div>
<!-- row 1 -->
<div class="t" style="left:351px;top:140px;font-size:6.85px;color:#4d4d4d">Отображать суммы</div>
<div class="a" style="left:417.3px;top:137px;width:98px;height:13px;border:1px solid #c8c8c8;background:#fff"></div>
<div class="a" style="left:503.4px;top:137.8px;width:11.5px;height:11.5px;background:#efefef;border-left:1px solid #dcdcdc"></div>
<svg class="a" style="left:506px;top:141px" width="5" height="5" viewBox="0 0 5 5"><path d="M0.8 1.4 H4.2 L2.5 3.6 Z" fill="#555"/></svg>
<div class="a" style="left:420px;top:140.6px;width:27.75px;height:8.15px;background:#3f62c4"></div>
<div class="t" style="left:420px;top:139.7px;font-size:6.9px;color:#fff">в рублях</div>
<div class="red" style="left:415.6px;top:135.25px;width:101.15px;height:17.75px"></div>
<div class="t" style="left:519.9px;top:140px;font-size:6.94px;color:#4d4d4d">с точностью</div>
<div class="a" style="left:564.5px;top:138.5px;width:21.6px;height:12.1px;border:1px solid #cfcfcf;border-radius:2px;background:#fff"></div>
<div class="a" style="left:575.5px;top:139px;width:1px;height:11px;background:#dcdcdc"></div>
<div class="a" style="left:576px;top:144.5px;width:9.5px;height:1px;background:#e2e2e2"></div>
<div class="t" style="left:570px;top:140px;font-size:7.2px;color:#555">2</div>
<svg class="a" style="left:578px;top:140px" width="6" height="10" viewBox="0 0 6 10"><path d="M2 2.6 L3 1.6 L4 2.6 Z M2 7.4 L3 8.4 L4 7.4 Z" fill="#777"/></svg>
<div class="t" style="left:592.25px;top:140px;font-size:6.82px;color:#4d4d4d">знаков после запятой.</div>
<!-- checkboxes -->
<div class="a" style="left:351.25px;top:157.5px;width:7.5px;height:7px;border:1px solid #c4c4c4;background:#fff"></div>
<div class="t" style="left:362.75px;top:156px;font-size:6.9px;color:#4d4d4d">Отключить автоматическое</div>
<div class="a" style="left:351.25px;top:171px;width:7.5px;height:7.5px;border:1px solid #c4c4c4;background:#fff"></div>
<svg class="a" style="left:351px;top:169.5px" width="9" height="9" viewBox="0 0 9 9"><path d="M1.4 4.6 L3.4 6.8 L7.8 1.4" stroke="#2aa33a" stroke-width="1.2" fill="none"/></svg>
<div class="t" style="left:362.75px;top:169.5px;font-size:6.9px;color:#4d4d4d">Сохранять расшифровку</div>
<!-- dropdown list -->
<div class="a" style="left:419px;top:152.2px;width:170px;height:48px;background:#fff;border:1px solid #9a9a9a;box-shadow:1px 1px 2px rgba(0,0,0,.2)"></div>
<div class="a" style="left:420px;top:153.5px;width:168px;height:15px;background:#f8c91d"></div>
<div class="red" style="left:418.6px;top:152px;width:171.3px;height:17.85px"></div>
<div class="t" style="left:429px;top:156.8px;font-size:6.9px;color:#333">в рублях</div>
<div class="t" style="left:429px;top:172.2px;font-size:6.9px;color:#4d4d4d">в тысячах рублей</div>
<div class="t" style="left:429px;top:187.5px;font-size:6.9px;color:#4d4d4d">в миллионах рублей</div>


</body></html>
